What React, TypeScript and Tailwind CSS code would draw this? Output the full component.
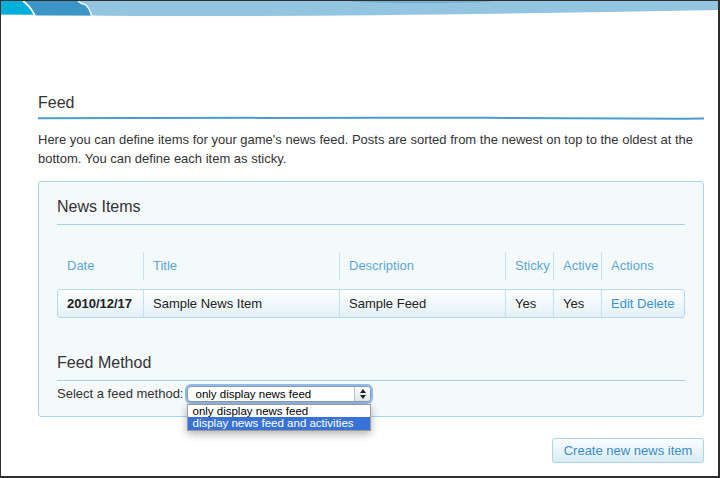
export default function App() {
  return (
    <div className="relative w-[720px] h-[478px] overflow-hidden bg-white border-t border-l border-r-2 border-b-2 border-[#2e2e2e] font-['Liberation_Sans',Arial,sans-serif] text-[#333]">
      <svg className="block" width="717" height="15" viewBox="0 0 717 15">
        <path d="M0 0 H717 V9 Q300 17 90 14.5 L0 13.5 Z" fill="#93c5e0" />
        <ellipse cx="420" cy="0" rx="70" ry="2.2" fill="#6ea5c8" opacity="0.7" />
        <path d="M0 0 H22 Q29 5 33 13.5 H0 Z" fill="#00b0da" />
        <path d="M24 0 H77 Q80 3 84 3.5 Q88 6 90 14.5 H35 Q30 5 24 0 Z" fill="#3c95c5" />
        <path d="M22 0 Q29 5 33.5 14" stroke="#ffffff" strokeWidth="1.6" fill="none" />
        <path d="M77 0 Q80 3 84 3.5 Q88 6 90.5 14.5" stroke="#ffffff" strokeWidth="1.4" fill="none" />
      </svg>
      <div className="pl-[37px] pr-[14px]">
        <h1 className="mt-[77px] text-[16px] leading-[20px] text-[#333]">Feed</h1>
        <svg className="block mt-[3px]" width="666" height="5" viewBox="0 0 666 5">
          <path d="M0 2.3 C 150 2, 300 1.4, 450 1.8 S 620 2.8, 666 2.6" stroke="#4b9ccc" strokeWidth="2" fill="none" strokeLinecap="round" />
        </svg>
        <p className="mt-[9px] text-[13px] leading-[19px] text-[#333]">
          Here you can define items for your game's news feed. Posts are sorted from the newest on top to the oldest at the bottom. You can define each item as sticky.
        </p>
        <div className="mt-[13px] border border-[#abd4ea] rounded-[3px] bg-[#f4f9fc] px-[18px] pt-[15px] pb-[13px]">
          <h2 className="text-[16px] leading-[20px] pb-[7px] border-b border-[#a9d3e9] text-[#333]">News Items</h2>
          <div className="grid grid-cols-[86px_196px_166px_48px_48px_84px] mt-[27px] h-[28px] text-[13px] text-[#5aa7d5]">
            <div className="flex items-center pl-[10px]">Date</div>
            <div className="flex items-center pl-[9px] border-l border-[#c8e2f0]">Title</div>
            <div className="flex items-center pl-[9px] border-l border-[#c8e2f0]">Description</div>
            <div className="flex items-center pl-[9px] border-l border-[#c8e2f0]">Sticky</div>
            <div className="flex items-center pl-[9px] border-l border-[#c8e2f0]">Active</div>
            <div className="flex items-center pl-[9px] border-l border-[#c8e2f0]">Actions</div>
          </div>
          <div className="grid grid-cols-[85px_196px_166px_48px_48px_83px] mt-[9px] h-[29px] border border-[#b6d8eb] rounded-[3px] bg-gradient-to-b from-[#fcfeff] to-[#e4f1f8] text-[13px] text-[#222]">
            <div className="flex items-center pl-[9px] font-bold">2010/12/17</div>
            <div className="flex items-center pl-[9px] border-l border-[#c4dfee]">Sample News Item</div>
            <div className="flex items-center pl-[9px] border-l border-[#c4dfee]">Sample Feed</div>
            <div className="flex items-center pl-[9px] border-l border-[#c4dfee]">Yes</div>
            <div className="flex items-center pl-[9px] border-l border-[#c4dfee]">Yes</div>
            <div className="flex items-center pl-[9px] border-l border-[#c4dfee] text-[#3b92cb]">Edit Delete</div>
          </div>
          <h2 className="mt-[35px] text-[16px] leading-[20px] pb-[7px] border-b border-[#a9d3e9] text-[#333]">Feed Method</h2>
          <div className="mt-[4px] h-[18px] flex items-center text-[13px]">
            <span>Select a feed method:</span>
            <div className="relative ml-[4px] w-[184px] h-[16px]">
              <div className="flex h-[16px] rounded-[4px] border border-[#8e9aa6] bg-white shadow-[0_0_0_2px_#8fbbe8] text-[11.5px] leading-[14px] text-black">
                <div className="flex-1 pl-[7px]">only display news feed</div>
                <div className="w-[16px] border-l border-[#b8c4ce] rounded-r-[3px] bg-gradient-to-b from-[#ffffff] to-[#dfe6ec] flex flex-col items-center justify-center gap-[2px]">
                  <svg width="6" height="4" viewBox="0 0 6 4"><path d="M3 0 L6 4 H0 Z" fill="#222" /></svg>
                  <svg width="6" height="4" viewBox="0 0 6 4"><path d="M0 0 H6 L3 4 Z" fill="#222" /></svg>
                </div>
              </div>
              <div className="absolute left-0 top-[18px] w-[184px] border border-[#9a9a9a] bg-white shadow-[0_3px_8px_rgba(0,0,0,0.3)] text-[11.5px] leading-[12px]">
                <div className="h-[12px] pl-[4px] text-black">only display news feed</div>
                <div className="h-[13px] pl-[4px] bg-[#3872d4] text-white">display news feed and activities</div>
              </div>
            </div>
          </div>
        </div>
        <div className="flex justify-end mt-[21px]">
          <button className="h-[25px] w-[152px] border border-[#acd3e8] rounded-[3px] bg-gradient-to-b from-[#fbfdfe] to-[#d9ecf6] text-[13px] text-[#3b8dc4] font-['Liberation_Sans',Arial,sans-serif]">
            Create new news item
          </button>
        </div>
      </div>
    </div>
  );
}
